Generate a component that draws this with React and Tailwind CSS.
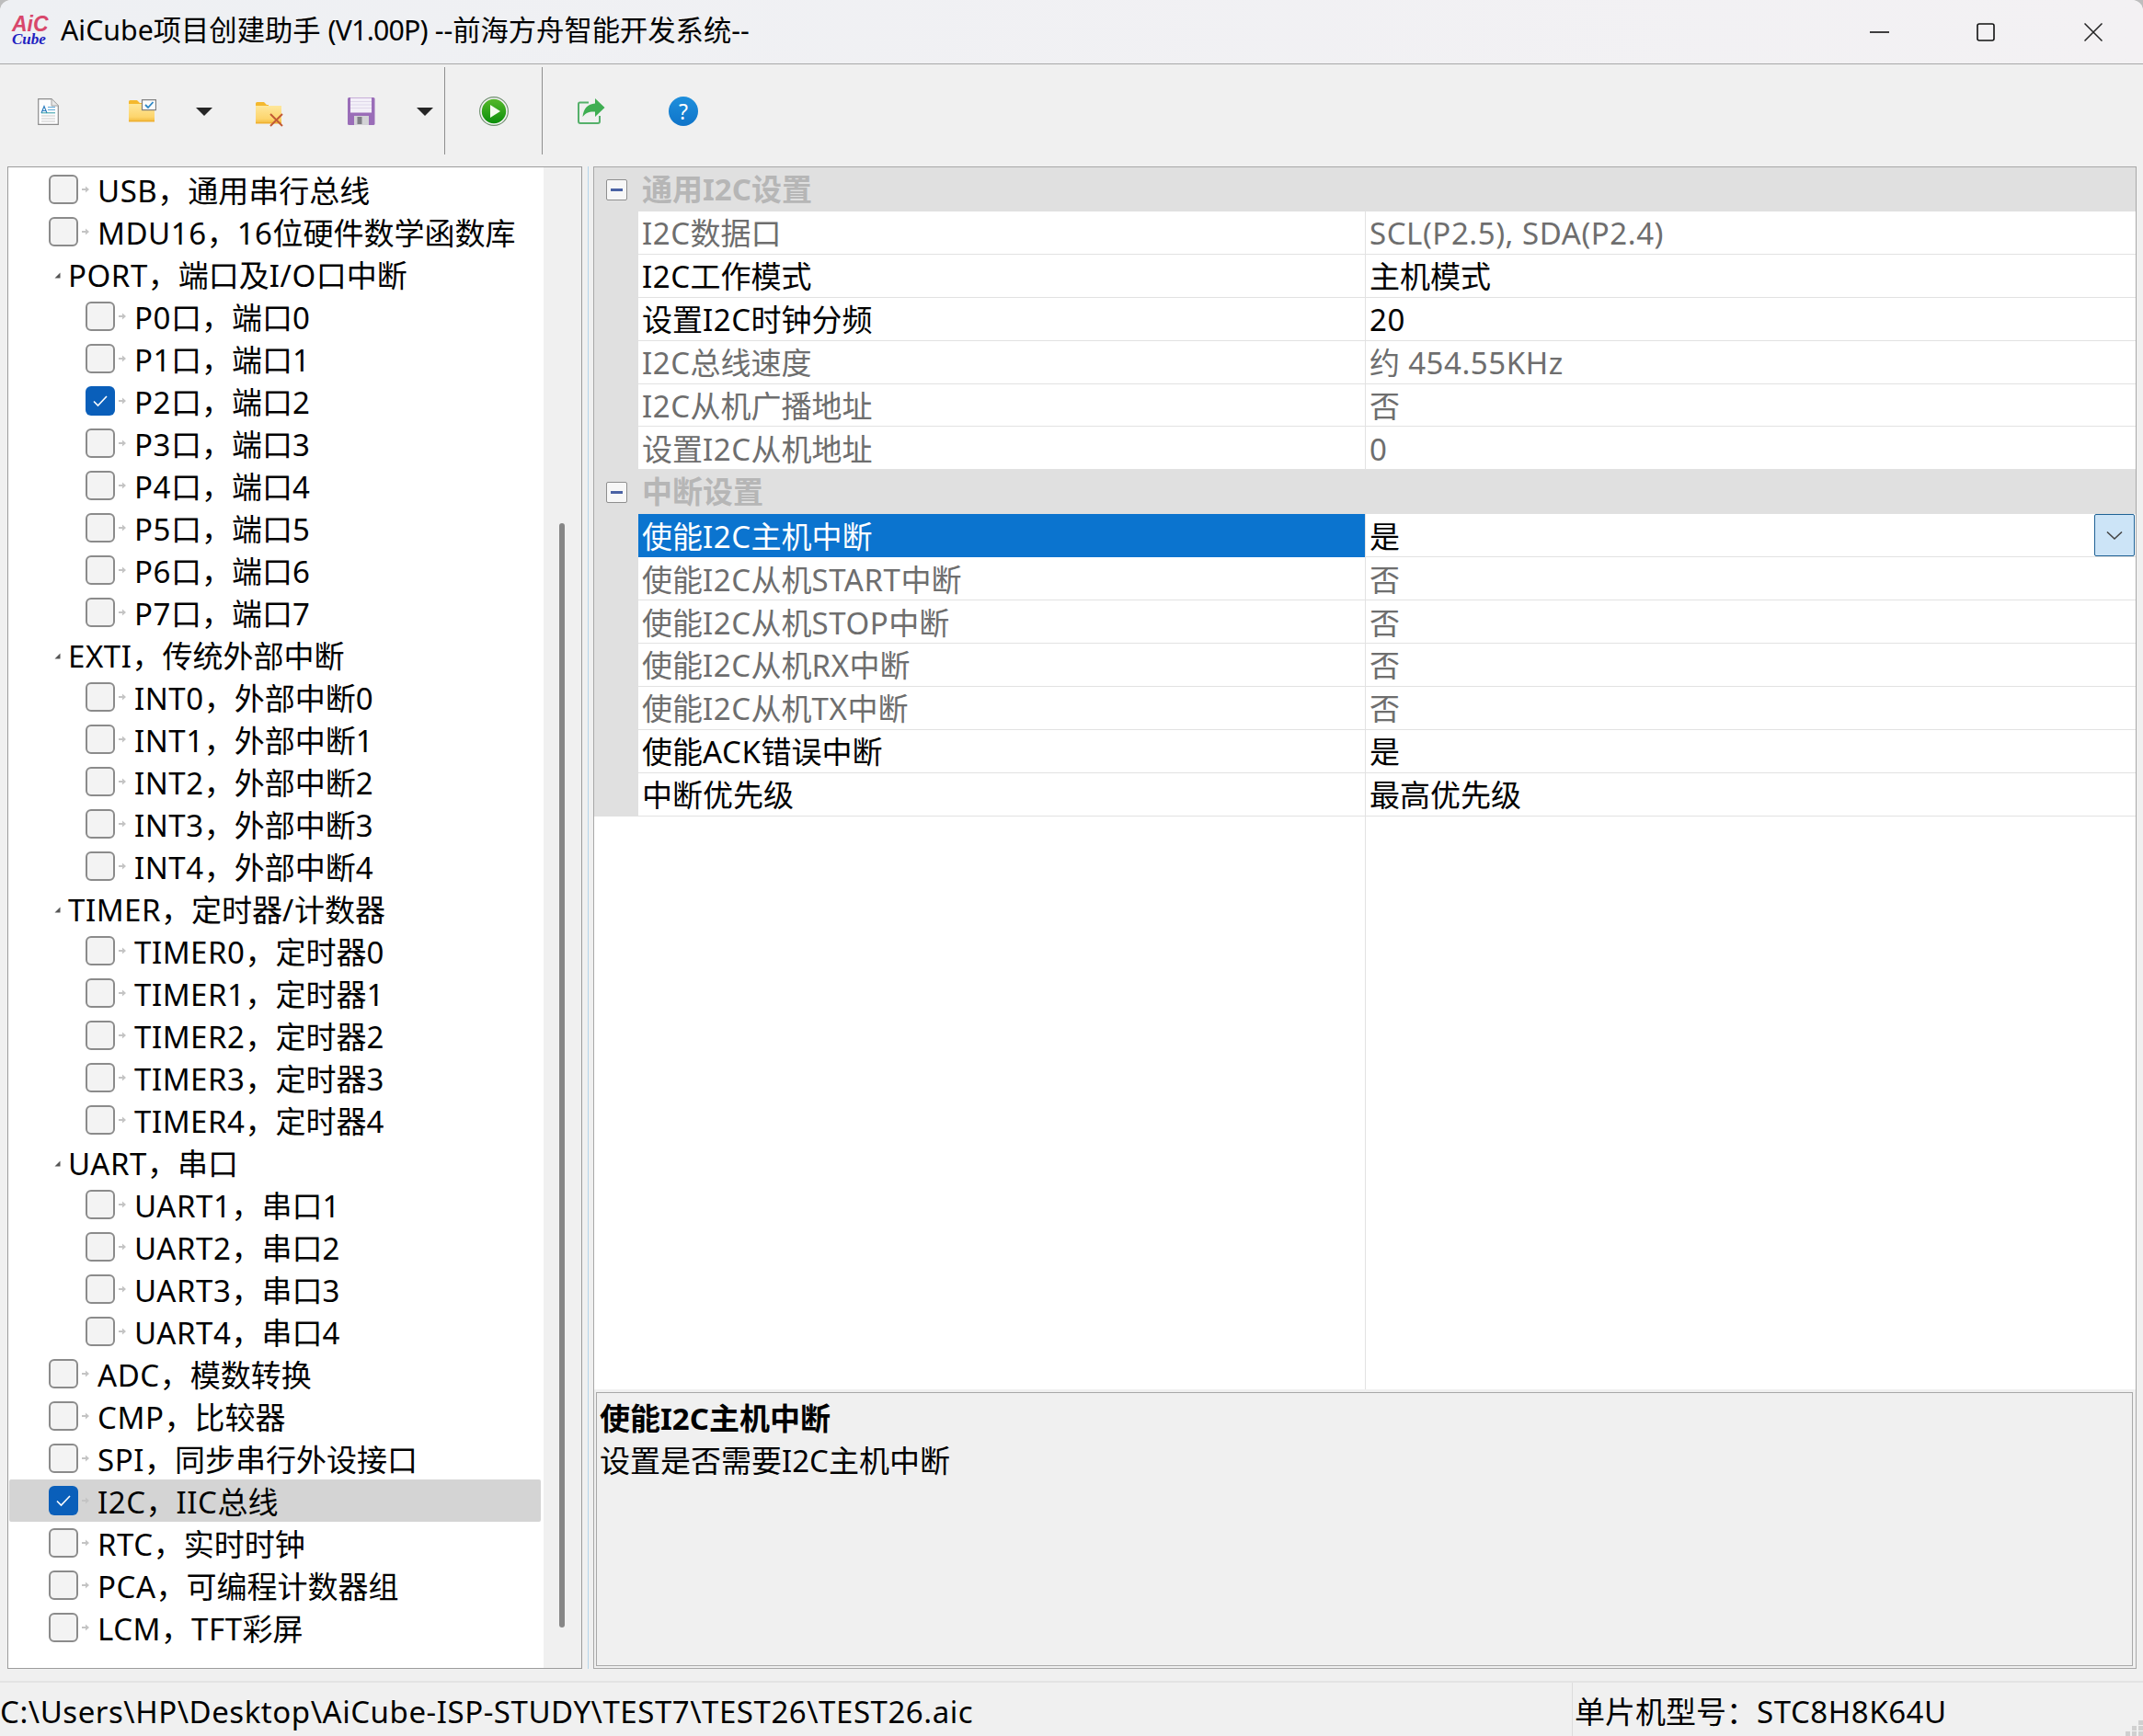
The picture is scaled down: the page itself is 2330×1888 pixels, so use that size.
const tree = [
  [0, 'USB，通用串行总线'], [0, 'MDU16，16位硬件数学函数库'], [1, 'PORT，端口及I/O口中断'],
  [2, 'P0口，端口0'], [2, 'P1口，端口1'], [2, 'P2口，端口2', true], [2, 'P3口，端口3'], [2, 'P4口，端口4'], [2, 'P5口，端口5'], [2, 'P6口，端口6'], [2, 'P7口，端口7'],
  [1, 'EXTI，传统外部中断'],
  [2, 'INT0，外部中断0'], [2, 'INT1，外部中断1'], [2, 'INT2，外部中断2'], [2, 'INT3，外部中断3'], [2, 'INT4，外部中断4'],
  [1, 'TIMER，定时器/计数器'],
  [2, 'TIMER0，定时器0'], [2, 'TIMER1，定时器1'], [2, 'TIMER2，定时器2'], [2, 'TIMER3，定时器3'], [2, 'TIMER4，定时器4'],
  [1, 'UART，串口'],
  [2, 'UART1，串口1'], [2, 'UART2，串口2'], [2, 'UART3，串口3'], [2, 'UART4，串口4'],
  [0, 'ADC，模数转换'], [0, 'CMP，比较器'], [0, 'SPI，同步串行外设接口'], [0, 'I2C，IIC总线', true, true], [0, 'RTC，实时时钟'], [0, 'PCA，可编程计数器组'], [0, 'LCM，TFT彩屏'],
];

const group1 = [
  ['I2C数据口', 'SCL(P2.5), SDA(P2.4)', true],
  ['I2C工作模式', '主机模式'],
  ['设置I2C时钟分频', '20'],
  ['I2C总线速度', '约 454.55KHz', true],
  ['I2C从机广播地址', '否', true],
  ['设置I2C从机地址', '0', true],
];
const group2 = [
  ['使能I2C主机中断', '是', false, true],
  ['使能I2C从机START中断', '否', true],
  ['使能I2C从机STOP中断', '否', true],
  ['使能I2C从机RX中断', '否', true],
  ['使能I2C从机TX中断', '否', true],
  ['使能ACK错误中断', '是'],
  ['中断优先级', '最高优先级'],
];

// Latin runs of the original UI font are slightly wider than Noto Sans
function T({ children }) {
  const parts = children.match(/[\x20-\x7e]+|[^\x20-\x7e]+/g) || [];
  return (
    <>
      {parts.map((p, i) =>
        /^[\x20-\x7e]/.test(p) ? <span key={i} className="tracking-[0.55px]">{p}</span> : <span key={i}>{p}</span>
      )}
    </>
  );
}

function Box({ checked }) {
  return checked ? (
    <span className="w-8 h-8 rounded-[6px] bg-[#0a5fba] flex items-center justify-center shrink-0">
      <svg width="20" height="16" viewBox="0 0 20 16" fill="none"><path d="M3 8.5 L7.5 13 L17 3" stroke="#fff" strokeWidth="1.6" /></svg>
    </span>
  ) : (
    <span className="w-8 h-8 rounded-[6px] border-2 border-[#8b8b8b] bg-[#f3f3f3] shrink-0" />
  );
}

function Arrow() {
  return (
    <svg className="ml-1 mr-[9px] shrink-0" width="8" height="8" viewBox="0 0 8 8"><path d="M0 3h4V0.5L8 4 4 7.5V5H0z" fill="#c4c4c4" /></svg>
  );
}

function TreeRow({ level, label, checked, selected }) {
  if (level === 1) {
    return (
      <div className="h-[46px] flex items-center pl-[49px] whitespace-nowrap">
        <svg className="mr-[8px] mt-[2px] shrink-0" width="7" height="7" viewBox="0 0 7 7"><path d="M6.5 0.5V6.5H0.5z" fill="#555" /></svg>
        <span className="pt-[3px]"><T>{label}</T></span>
      </div>
    );
  }
  return (
    <div className={`h-[46px] flex items-center whitespace-nowrap rounded-[2px] ${level === 2 ? 'pl-[83px]' : 'pl-[43px]'} ${selected ? 'bg-[#d4d4d4]' : ''}`}>
      <Box checked={checked} />
      <Arrow />
      <span className="pt-[3px]"><T>{label}</T></span>
    </div>
  );
}

function Minus() {
  return (
    <span className="w-[23px] h-[23px] ml-[13px] border border-[#8f8f8f] rounded-[2px] bg-[#f7f7f7] flex items-center justify-center shrink-0">
      <span className="w-[13px] h-[3px] bg-[#4a62a4]" />
    </span>
  );
}

function GroupHead({ title }) {
  return (
    <div className="h-12 bg-[#e0e0e0] flex items-center shrink-0">
      <Minus />
      <span className="ml-4 font-bold text-[#b6b6b6]">{title}</span>
    </div>
  );
}

function PropRow({ label, value, dim, selected }) {
  const tone = dim ? 'text-[#6e6e6e]' : 'text-black';
  return (
    <div className="flex h-[46.9px] shrink-0">
      <div className="w-12 bg-[#e0e0e0] shrink-0" />
      <div className={`w-[791px] shrink-0 pl-1 pt-[3px] flex items-center border-b border-r border-[#e2e2e2] whitespace-nowrap ${selected ? 'bg-[#0b74cf] text-white border-b-0' : tone}`}><span><T>{label}</T></span></div>
      <div className={`flex-1 relative pl-1 pt-[3px] flex items-center border-b border-[#e2e2e2] whitespace-nowrap ${tone}`}>
        <span><T>{value}</T></span>
        {selected && (
          <span className="absolute right-[1px] top-0 w-[44px] h-[46px] bg-[#cce4f7] border border-[#1f6295] rounded-[2px] flex items-center justify-center">
            <svg width="18" height="11" viewBox="0 0 18 11" fill="none"><path d="M1 1.5 L9 9 L17 1.5" stroke="#444" strokeWidth="1.6" /></svg>
          </span>
        )}
      </div>
    </div>
  );
}

function DocIcon() {
  return (
    <svg className="ml-[41px] mt-[37px] shrink-0" width="23" height="29" viewBox="0 0 23 29">
      <path d="M0.7 0.7H15L22.3 8V28.3H0.7z" fill="#fdfdfe" stroke="#8c8c8c" strokeWidth="1.2" />
      <path d="M15 0.7V8H22.3" fill="#e8e8e8" stroke="#a0a0a0" />
      <path d="M4 16L7 8.5L10 16M5 13.5H9" fill="none" stroke="#2f7fc0" strokeWidth="1.2" />
      <path d="M11 9.5H19M11 12.5H19" stroke="#5fa8d8" />
      <path d="M4 15.8H19" stroke="#2e9aa5" />
      <path d="M4 19H19M4 22H19M4 25H19" stroke="#c9c9c9" />
    </svg>
  );
}

function Folder() {
  return (
    <>
      <defs>
        <linearGradient id="fold" x1="0" y1="0" x2="0" y2="1">
          <stop offset="0" stopColor="#fee79b" />
          <stop offset="0.75" stopColor="#fdd56d" />
          <stop offset="1" stopColor="#f2b93a" />
        </linearGradient>
      </defs>
      <path d="M0 2.5Q0 1 1.5 1H9L12 4H14V6H0z" fill="#f4b82e" />
      <rect x="0" y="5" width="28" height="19" fill="url(#fold)" />
      <rect x="0" y="23" width="28" height="1.5" fill="#efb030" />
    </>
  );
}

function FolderCheck() {
  return (
    <svg className="ml-[76px] mt-[38px] shrink-0" width="30" height="25" viewBox="0 0 30 25">
      <Folder />
      <rect x="14.5" y="0.6" width="15" height="11" fill="#fbfbfb" stroke="#7e7e7e" strokeWidth="1.2" />
      <path d="M18 6L21 9L26.5 3" fill="none" stroke="#2b86c5" strokeWidth="1.8" />
    </svg>
  );
}

function FolderX() {
  return (
    <svg className="ml-[47px] mt-[40px] shrink-0" width="30" height="28" viewBox="0 0 30 28">
      <Folder />
      <path d="M16 14L29 27M29 14L16 27" stroke="#c25a36" strokeWidth="2" />
    </svg>
  );
}

function Floppy() {
  return (
    <svg className="ml-[70px] mt-[36px] shrink-0" width="30" height="30" viewBox="0 0 30 30">
      <rect x="0" y="0" width="29.5" height="30" rx="1.5" fill="#9a6db8" />
      <rect x="3" y="0.5" width="23" height="16" fill="#f3f0f8" />
      <path d="M3 4.5H26M3 8H26M3 11.5H26" stroke="#dfd8ea" />
      <rect x="7" y="20" width="16" height="10" fill="#d3d3d6" />
      <rect x="10.5" y="21" width="5" height="8" fill="#7f7f85" />
    </svg>
  );
}

function Play() {
  return (
    <svg className="ml-[37px] mt-[35px] shrink-0" width="32" height="32" viewBox="0 0 32 32">
      <defs>
        <linearGradient id="pl" x1="0" y1="0" x2="0" y2="1">
          <stop offset="0" stopColor="#55b82a" />
          <stop offset="1" stopColor="#0b8f0b" />
        </linearGradient>
      </defs>
      <circle cx="16" cy="16" r="15.4" fill="#f2f2f2" stroke="#6f8f6f" strokeWidth="1.1" />
      <circle cx="16" cy="16" r="13.2" fill="url(#pl)" />
      <path d="M12 9L23 16L12 23z" fill="#f4fbef" />
    </svg>
  );
}

function Share() {
  return (
    <svg className="ml-[38px] mt-[37px] shrink-0" width="30" height="28" viewBox="0 0 30 28">
      <path d="M12 4.5H2.5Q1 4.5 1 6V25Q1 27 3 27H22Q24 27 24 25V19" fill="none" stroke="#55b06a" strokeWidth="2" />
      <path d="M29.5 10L19 0V5.5C11 6 6.5 11 5.5 20C9 15.5 13 14 19 14.5V20z" fill="#3fae52" />
    </svg>
  );
}

function Help() {
  return (
    <div className="ml-[69px] mt-[35px] w-8 h-8 rounded-full shrink-0 bg-[linear-gradient(180deg,#1e8fdc,#0f74c9)] flex items-center justify-center text-white text-[23px] font-normal leading-none">?</div>
  );
}

function Caret({ ml }) {
  return <span className={`${ml} mt-[47px] w-0 h-0 shrink-0 border-x-[9px] border-x-transparent border-t-[9px] border-t-[#262626]`} />;
}

function Logo() {
  return (
    <svg className="ml-3 shrink-0" width="42" height="50" viewBox="0 0 42 50">
      <text x="1" y="24" fontFamily="'Liberation Sans',sans-serif" fontStyle="italic" fontWeight="700" fontSize="23" fill="#d8476b">AiC</text>
      <text x="1" y="38" fontFamily="'Liberation Serif',serif" fontStyle="italic" fontWeight="700" fontSize="17" fill="#2020c0">Cube</text>
    </svg>
  );
}

export default function App() {
  return (
    <div className="w-[2330px] h-[1888px] bg-[#bdbdbd] overflow-hidden font-['Noto_Sans','Noto_Sans_CJK_SC',sans-serif] text-[33px] leading-[46px] text-black">
      <div className="w-full h-full rounded-t-[12px] bg-[#f0f0f0] flex flex-col overflow-hidden">
        {/* title bar */}
        <div className="h-[70px] shrink-0 flex items-center bg-[linear-gradient(90deg,#eef0f3,#f3f1f3)] border-b border-[#a8a8a8]">
          <Logo />
          <span className="ml-3 mb-[3px] text-[30.3px] whitespace-nowrap">AiCube项目创建助手 <span className="tracking-[-0.8px]">(V1.00P)</span> --前海方舟智能开发系统--</span>
          <div className="ml-auto flex items-center mr-[44px]">
            <svg width="21" height="20" viewBox="0 0 21 20"><path d="M0 10H21" stroke="#111" strokeWidth="1.6" /></svg>
            <svg className="ml-[95px]" width="20" height="20" viewBox="0 0 20 20" fill="none"><rect x="1" y="1" width="18" height="18" rx="2" stroke="#111" strokeWidth="1.6" /></svg>
            <svg className="ml-[97px]" width="20" height="20" viewBox="0 0 20 20" fill="none"><path d="M0.5 0.5L19.5 19.5M19.5 0.5L0.5 19.5" stroke="#222" strokeWidth="1.5" /></svg>
          </div>
        </div>

        {/* toolbar */}
        <div className="h-[111px] shrink-0 flex items-start">
          <DocIcon />
          <FolderCheck />
          <Caret ml="ml-[43px]" />
          <FolderX />
          <Floppy />
          <Caret ml="ml-[45px]" />
          <span className="ml-[12px] mt-[3px] w-px h-[95px] bg-[#8f8f8f] shrink-0" />
          <Play />
          <span className="ml-[36px] mt-[3px] w-px h-[95px] bg-[#8f8f8f] shrink-0" />
          <Share />
          <Help />
        </div>

        {/* body */}
        <div className="h-[1634px] shrink-0 flex pl-2">
          {/* tree */}
          <div className="w-[625px] shrink-0 border border-[#9c9c9c] bg-white flex">
            <div className="flex-1 pt-[1px] pl-[1px] pr-[3px] min-w-0">
              {tree.map(([lvl, label, c, s]) => (
                <TreeRow key={label} level={lvl} label={label} checked={c} selected={s} />
              ))}
            </div>
            <div className="w-[41px] bg-[#f0f0f0] shrink-0 pt-[387px] pl-[17px]">
              <div className="w-[6px] h-[1201px] rounded-full bg-[#868686]" />
            </div>
          </div>

          {/* splitter */}
          <div className="w-3 shrink-0 flex justify-center">
            <span className="w-px h-full bg-[#b5d5ea]" />
          </div>

          {/* property grid */}
          <div className="flex-1 mr-[7px] border border-[#a8a8a8] flex flex-col min-w-0">
            <div className="flex-1 mb-[3px] flex flex-col bg-white min-h-0">
              <GroupHead title="通用I2C设置" />
              {group1.map(([l, v, d]) => <PropRow key={l} label={l} value={v} dim={d} />)}
              <GroupHead title="中断设置" />
              {group2.map(([l, v, d, s]) => <PropRow key={l} label={l} value={v} dim={d} selected={s} />)}
              <div className="flex-1 flex">
                <div className="w-[839px] shrink-0 border-r border-[#e2e2e2]" />
              </div>
            </div>
            <div className="h-[298px] shrink-0 ml-[2px] mr-[3px] mb-[2px] border border-[#a8a8a8] px-[3px] pt-[5px]">
              <div className="font-bold">使能I2C主机中断</div>
              <div>设置是否需要I2C主机中断</div>
            </div>
          </div>
        </div>

        {/* status bar */}
        <div className="mt-[13px] flex-1 border-t-2 border-[#e3e3e3] flex items-stretch relative">
          <div className="w-[1709px] shrink-0 flex items-center whitespace-nowrap pt-[6px]"><span><T>C:\Users\HP\Desktop\AiCube-ISP-STUDY\TEST7\TEST26\TEST26.aic</T></span></div>
          <div className="flex-1 border-l border-[#dcdcdc] pl-[2px] flex items-center whitespace-nowrap pt-[6px]"><span><T>单片机型号：STC8H8K64U</T></span></div>
          <svg className="absolute right-0 bottom-0" width="20" height="20" viewBox="0 0 20 20" fill="#d0d0d0">
            <rect x="15" y="3" width="5" height="5" /><rect x="8" y="9" width="5" height="5" /><rect x="15" y="9" width="5" height="5" /><rect x="1" y="15" width="5" height="5" /><rect x="8" y="15" width="5" height="5" /><rect x="15" y="15" width="5" height="5" />
          </svg>
        </div>
      </div>
    </div>
  );
}
